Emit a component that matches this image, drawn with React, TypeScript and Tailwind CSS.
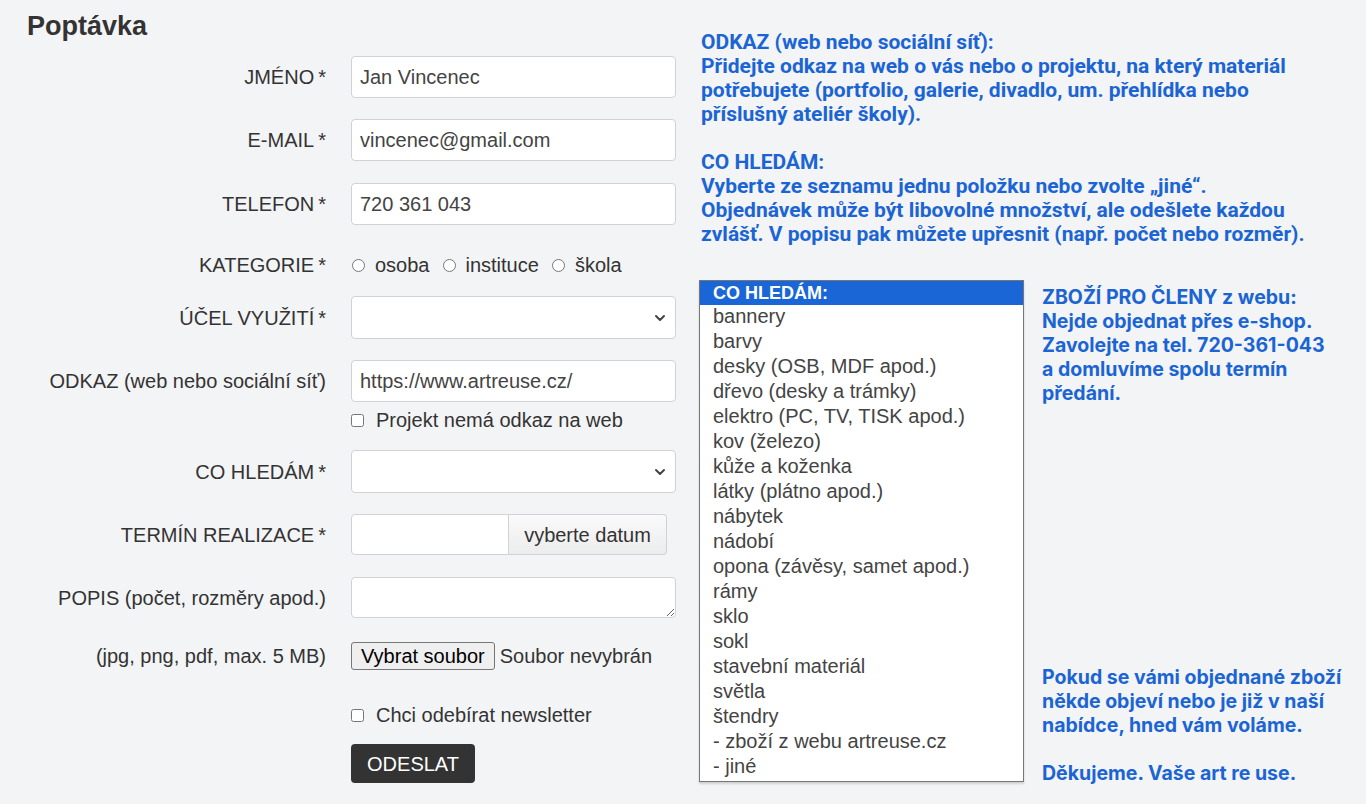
import { useState } from 'react'

const items = [
  'bannery',
  'barvy',
  'desky (OSB, MDF apod.)',
  'dřevo (desky a trámky)',
  'elektro (PC, TV, TISK apod.)',
  'kov (železo)',
  'kůže a koženka',
  'látky (plátno apod.)',
  'nábytek',
  'nádobí',
  'opona (závěsy, samet apod.)',
  'rámy',
  'sklo',
  'sokl',
  'stavební materiál',
  'světla',
  'štendry',
  '- zboží z webu artreuse.cz',
  '- jiné',
]

const inputCls =
  'w-[325px] h-[42px] bg-white border border-[#cfd2d6] rounded-[4px] px-[8px] text-[20px] text-[#444] outline-none'

function Chevron() {
  return (
    <svg className="absolute right-[10px] top-1/2 -translate-y-1/2 w-[12px] h-[12px] pointer-events-none" viewBox="0 0 12 12" fill="none">
      <path d="M2 4l4 4 4-4" stroke="#444" strokeWidth={2} strokeLinecap="round" strokeLinejoin="round" />
    </svg>
  )
}

function Req({ children }: { children: React.ReactNode }) {
  return (
    <>
      {children}
      <span className="ml-[4px]">*</span>
    </>
  )
}

function Row({ label, children, className = '' }: { label?: React.ReactNode; children: React.ReactNode; className?: string }) {
  return (
    <div className={`grid grid-cols-[326px_325px] gap-x-[25px] items-center ${className}`}>
      <div className="text-right text-[20px] text-[#333] leading-[24px]">{label}</div>
      <div className="flex items-center">{children}</div>
    </div>
  )
}

export default function App() {
  const [kategorie, setKategorie] = useState('')

  return (
    <div className="min-h-[804px] bg-[#f3f4f6] flex" style={{ fontFamily: '"Liberation Sans", Arial, sans-serif' }}>
      {/* Form */}
      <div className="w-[699px] shrink-0">
        <h1 className="pl-[27px] pt-[10px] text-[27px] leading-[32px] font-bold text-[#333]">Poptávka</h1>

        <Row label={<Req>JMÉNO</Req>} className="mt-[14px]">
          <input className={inputCls} defaultValue="Jan Vincenec" />
        </Row>
        <Row label={<Req>E-MAIL</Req>} className="mt-[21px]">
          <input className={inputCls} defaultValue="vincenec@gmail.com" />
        </Row>
        <Row label={<Req>TELEFON</Req>} className="mt-[22px]">
          <input className={inputCls} defaultValue="720 361 043" />
        </Row>
        <Row label={<Req>KATEGORIE</Req>} className="mt-[19px] h-[42px]">
          <div className="flex items-center text-[20px] text-[#333]">
            {['osoba', 'instituce', 'škola'].map((k, i) => (
              <label key={k} className={`flex items-center ${i > 0 ? 'ml-[12px]' : ''}`}>
                <input
                  type="radio"
                  name="kat"
                  checked={kategorie === k}
                  onChange={() => setKategorie(k)}
                  className="w-[13px] h-[13px] ml-[1px] mr-[10px] accent-[#333]"
                />
                {k}
              </label>
            ))}
          </div>
        </Row>
        <Row label={<Req>ÚČEL VYUŽITÍ</Req>} className="mt-[10px]">
          <div className="relative">
            <select className={`${inputCls} h-[43px] appearance-none`}>
              <option></option>
            </select>
            <Chevron />
          </div>
        </Row>
        <Row label="ODKAZ (web nebo sociální síť)" className="mt-[21px]">
          <input className={inputCls} defaultValue="https://www.artreuse.cz/" />
        </Row>
        <Row className="mt-[3px] h-[24px]">
          <label className="flex items-center text-[20px] text-[#333]">
            <input type="checkbox" className="w-[13px] h-[13px] mr-[12px]" />
            Projekt nemá odkaz na web
          </label>
        </Row>
        <Row label={<Req>CO HLEDÁM</Req>} className="mt-[21px]">
          <div className="relative">
            <select className={`${inputCls} h-[43px] appearance-none`}>
              <option></option>
            </select>
            <Chevron />
          </div>
        </Row>
        <Row label={<Req>TERMÍN REALIZACE</Req>} className="mt-[21px]">
          <div className="flex h-[41px]">
            <input className="w-[158px] h-full bg-white border border-[#cfd2d6] rounded-l-[4px] px-[8px] text-[20px] outline-none" />
            <button className="w-[158px] h-full border border-l-0 border-[#cfd2d6] rounded-r-[4px] bg-gradient-to-b from-[#fafafa] to-[#ececec] text-[20px] text-[#333]">
              vyberte datum
            </button>
          </div>
        </Row>
        <Row label="POPIS (počet, rozměry apod.)" className="mt-[22px]">
          <textarea className="w-[325px] h-[41px] bg-white border border-[#cfd2d6] rounded-[4px] px-[8px] text-[20px] outline-none block" />
        </Row>
        <Row label="(jpg, png, pdf, max. 5 MB)" className="mt-[23px] h-[28px]">
          <div className="flex items-center text-[20px] text-[#333]">
            <button className="h-[28px] px-[9px] bg-[#efefef] border border-[#767676] rounded-[3px] text-[20px] text-black leading-none">
              Vybrat soubor
            </button>
            <span className="ml-[5px]">Soubor nevybrán</span>
          </div>
        </Row>
        <Row className="mt-[31px] h-[24px]">
          <label className="flex items-center text-[20px] text-[#333]">
            <input type="checkbox" className="w-[13px] h-[13px] mr-[12px]" />
            Chci odebírat newsletter
          </label>
        </Row>
        <Row className="mt-[20px]">
          <button className="w-[124px] h-[39px] bg-[#333] text-white text-[20px] rounded-[4px]">ODESLAT</button>
        </Row>
      </div>

      {/* Right side */}
      <div className="flex-1 min-w-0">
        <div
          className="pt-[30px] pl-[2px] text-[21px] leading-[24px] font-bold text-[#1b64d4] whitespace-nowrap"
          style={{ fontFamily: 'Roboto, "Liberation Sans", sans-serif' }}
        >
          <p>ODKAZ (web nebo sociální síť):</p>
          <p>Přidejte odkaz na web o vás nebo o projektu, na který materiál</p>
          <p>potřebujete (portfolio, galerie, divadlo, um. přehlídka nebo</p>
          <p>příslušný ateliér školy).</p>
          <p className="mt-[24px]">CO HLEDÁM:</p>
          <p>Vyberte ze seznamu jednu položku nebo zvolte „jiné“.</p>
          <p>Objednávek může být libovolné množství, ale odešlete každou</p>
          <p>zvlášť. V popisu pak můžete upřesnit (např. počet nebo rozměr).</p>
        </div>

        <div className="flex mt-[34px]">
          <div className="w-[325px] h-[502px] shrink-0 bg-white border border-[#767676] shadow-[0_2px_2px_rgba(0,0,0,0.15)]">
            <div className="h-[24px] bg-[#1a66d6] text-white font-bold text-[18px] leading-[24px] pl-[13px]">CO HLEDÁM:</div>
            <ul className="-mt-[1px]">
              {items.map((it) => (
                <li key={it} className="pl-[13px] text-[20px] leading-[25px] text-[#444]">
                  {it}
                </li>
              ))}
            </ul>
          </div>

          <div
            className="flex-1 pl-[18px] flex flex-col justify-between pt-[5px] text-[19.5px] leading-[24px] font-bold text-[#1b64d4] whitespace-nowrap"
            style={{ fontFamily: 'Inter, "Liberation Sans", sans-serif' }}
          >
            <div>
              <p>ZBOŽÍ PRO ČLENY z webu:</p>
              <p>Nejde objednat přes e-shop.</p>
              <p>Zavolejte na tel. 720-361-043</p>
              <p>a domluvíme spolu termín</p>
              <p>předání.</p>
            </div>
            <div className="mb-[-3px]">
              <p>Pokud se vámi objednané zboží</p>
              <p>někde objeví nebo je již v naší</p>
              <p>nabídce, hned vám voláme.</p>
              <p className="mt-[24px]">Děkujeme. Vaše art re use.</p>
            </div>
          </div>
        </div>
      </div>
    </div>
  )
}
